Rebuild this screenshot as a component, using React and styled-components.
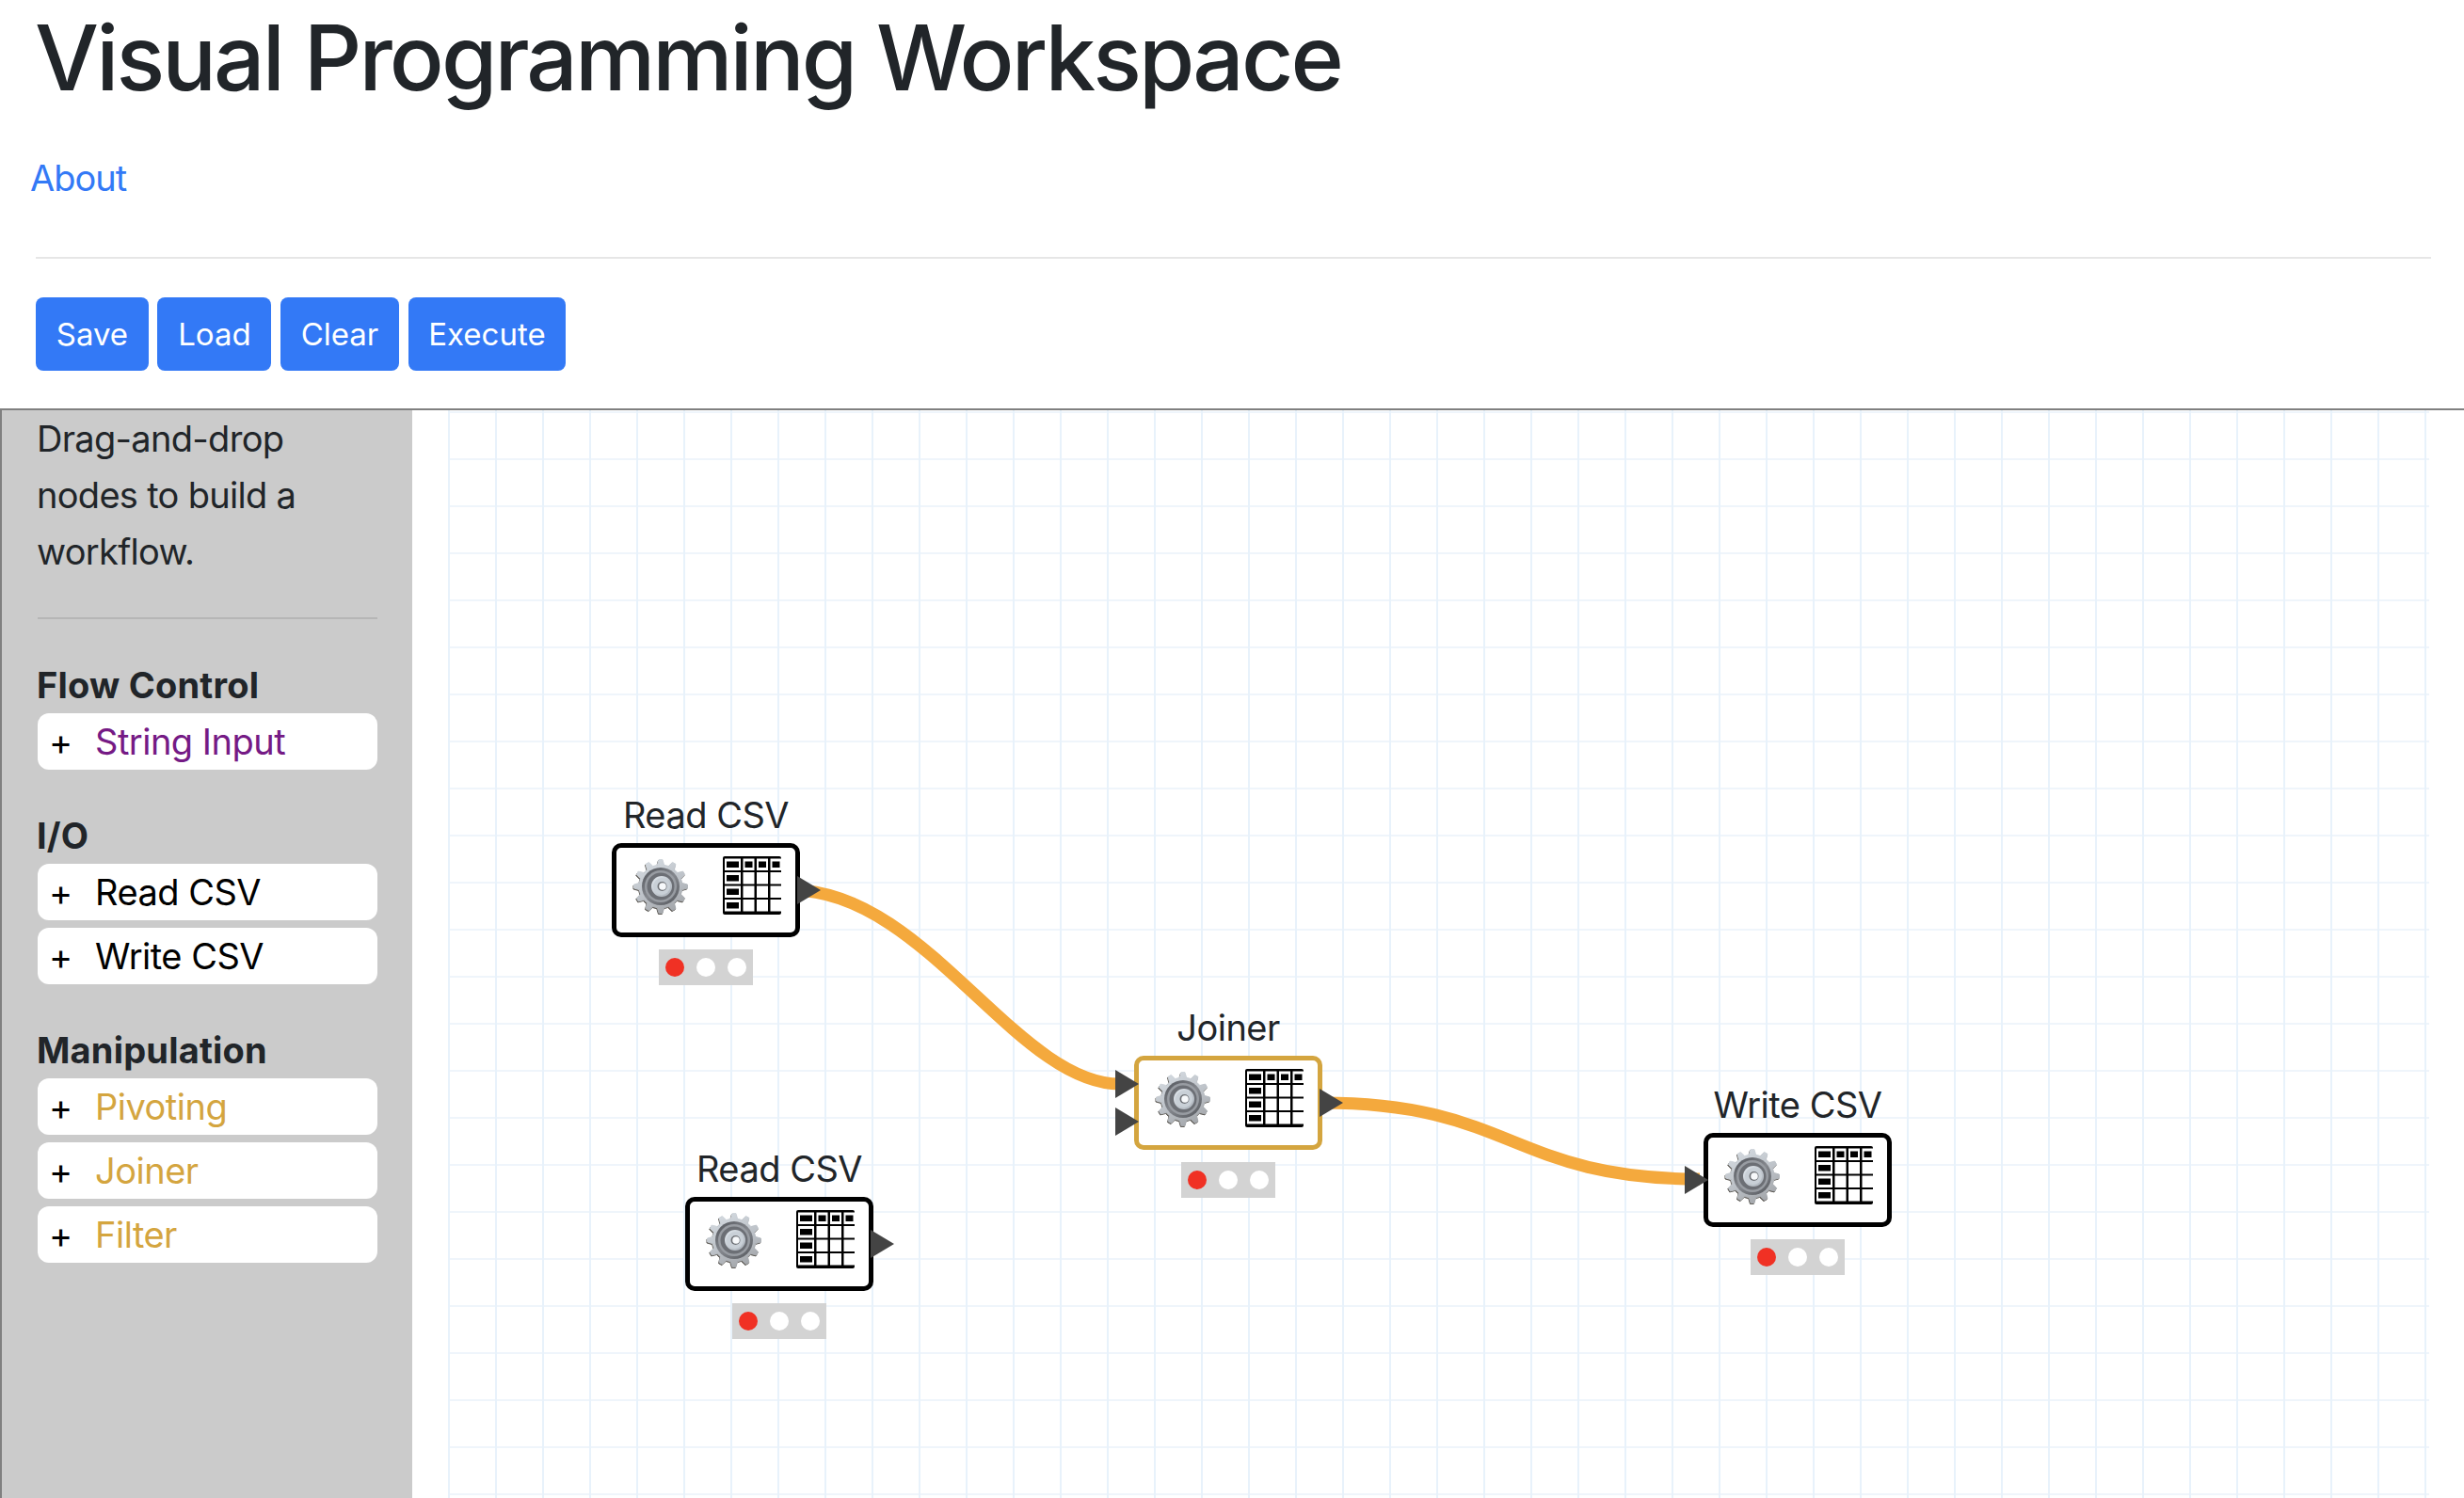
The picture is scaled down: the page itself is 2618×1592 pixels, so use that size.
import React from 'react'
import styled, { createGlobalStyle } from 'styled-components'

const GlobalStyle = createGlobalStyle`
  html, body {
    margin: 0;
    padding: 0;
    background: #fff;
    font-family: Inter, "Noto Sans", "Liberation Sans", sans-serif;
    color: #212529;
  }
`

const palette = [
  {
    title: 'Flow Control',
    items: [{ label: 'String Input', color: '#751a85' }],
  },
  {
    title: 'I/O',
    items: [
      { label: 'Read CSV', color: '#000' },
      { label: 'Write CSV', color: '#000' },
    ],
  },
  {
    title: 'Manipulation',
    items: [
      { label: 'Pivoting', color: '#d4a53f' },
      { label: 'Joiner', color: '#d4a53f' },
      { label: 'Filter', color: '#d4a53f' },
    ],
  },
]

const nodes = [
  { id: 'read-1', title: 'Read CSV', x: 174, y: 405, inputs: [], hasOutput: true },
  { id: 'joiner', title: 'Joiner', x: 729, y: 631, inputs: [10, 50], hasOutput: true, active: true },
  { id: 'write', title: 'Write CSV', x: 1334, y: 713, inputs: [30], hasOutput: false },
  { id: 'read-2', title: 'Read CSV', x: 252, y: 781, inputs: [], hasOutput: true },
]

function gearPath(teeth, outer, inner) {
  const step = (Math.PI * 2) / teeth
  const points = []
  for (let i = 0; i < teeth; i++) {
    const a = i * step - Math.PI / 2
    const corners = [
      [inner, a - step * 0.3],
      [outer, a - step * 0.13],
      [outer, a + step * 0.13],
      [inner, a + step * 0.3],
    ]
    corners.forEach(([r, t]) => {
      points.push(`${(30 + r * Math.cos(t)).toFixed(2)} ${(30 + r * Math.sin(t)).toFixed(2)}`)
    })
  }
  return `M${points.join('L')}Z`
}

const GEAR = gearPath(12, 28.5, 23)

function GearIcon({ id }) {
  return (
    <GearSvg viewBox="0 0 60 60">
      <defs>
        <linearGradient id={`${id}-body`} x1="0.2" y1="0" x2="0.7" y2="1">
          <stop offset="0" stopColor="#d5dbe1" />
          <stop offset="0.55" stopColor="#bcc1c7" />
          <stop offset="1" stopColor="#a2a5a9" />
        </linearGradient>
        <linearGradient id={`${id}-ring`} x1="0.1" y1="0" x2="0.9" y2="1">
          <stop offset="0" stopColor="#55585e" />
          <stop offset="0.5" stopColor="#85888e" />
          <stop offset="1" stopColor="#585b60" />
        </linearGradient>
        <linearGradient id={`${id}-hub`} x1="0" y1="0" x2="1" y2="1">
          <stop offset="0" stopColor="#e3e9ef" />
          <stop offset="1" stopColor="#a9b0b8" />
        </linearGradient>
      </defs>
      <GearShadow d={GEAR} transform="translate(-0.6 1)" />
      <GearBody d={GEAR} stroke={`url(#${id}-body)`} fill={`url(#${id}-body)`} />
      <circle cx="30" cy="30" r="20" fill={`url(#${id}-ring)`} />
      <circle cx="30" cy="30" r="17" fill="#989ca2" />
      <circle cx="30" cy="30" r="14.5" fill="#6c6f75" />
      <circle cx="31" cy="30" r="11" fill={`url(#${id}-hub)`} />
      <circle cx="31" cy="30" r="9" fill="#c9d0d7" />
      <circle cx="31.5" cy="30" r="5" fill="#6e7176" />
      <circle cx="32" cy="30" r="3.8" fill="#f7f9fb" />
    </GearSvg>
  )
}

const colWidths = [17, 12, 12, 12]

function TableIcon() {
  let cx = 2
  const cols = colWidths.map((w) => {
    const col = { x: cx, w }
    cx += w + 2.5
    return col
  })
  const rows = [0, 1, 2, 3].map((r) => 2.5 + r * 14.5)

  return (
    <TableSvg viewBox="0 0 62 62">
      <rect width="62" height="62" rx="2" fill="#000" />
      {rows.map((y, r) =>
        cols.map((col, c) => (
          <g key={`${r}-${c}`}>
            <rect x={col.x} y={y} width={col.w} height="12.5" fill="#fff" />
            {(r === 0 || c === 0) && (
              <rect
                x={col.x + 2}
                y={y + 3}
                width={col.w - 4}
                height="6.5"
                fill="#000"
              />
            )}
          </g>
        )),
      )}
    </TableSvg>
  )
}

function WorkflowNode({ node }) {
  return (
    <NodeWrap $x={node.x} $y={node.y}>
      <NodeTitle>{node.title}</NodeTitle>
      <NodeBox $active={node.active}>
        <GearIcon id={node.id} />
        <TableIcon />
        {node.inputs.map((top) => (
          <InputPort key={top} $top={top} />
        ))}
        {node.hasOutput && <OutputPort />}
      </NodeBox>
      <StatusBar>
        <StatusDot $color="#f03124" />
        <StatusDot $color="#fff" />
        <StatusDot $color="#fff" />
      </StatusBar>
    </NodeWrap>
  )
}

export default function App() {
  return (
    <>
      <GlobalStyle />
      <Page>
        <Header>
          <Title>Visual Programming Workspace</Title>
          <AboutLink href="#about">About</AboutLink>
          <HeaderRule />
          <Toolbar>
            <ToolButton>Save</ToolButton>
            <ToolButton>Load</ToolButton>
            <ToolButton>Clear</ToolButton>
            <ToolButton>Execute</ToolButton>
          </Toolbar>
        </Header>
        <Main>
          <Sidebar>
            <Hint>Drag-and-drop nodes to build a workflow.</Hint>
            <SideRule />
            {palette.map((group) => (
              <Group key={group.title}>
                <GroupTitle>{group.title}</GroupTitle>
                {group.items.map((item) => (
                  <PaletteItem key={item.label}>
                    <Plus>+</Plus>
                    <ItemLabel $color={item.color}>{item.label}</ItemLabel>
                  </PaletteItem>
                ))}
              </Group>
            ))}
          </Sidebar>
          <Canvas>
            <Edges viewBox="0 0 2105 1156">
              <Edge d="M366 510 C506 510 604 716 714 716" />
              <Edge d="M929 736 C1130 736 1130 817 1330 817" />
            </Edges>
            {nodes.map((node) => (
              <WorkflowNode key={node.id} node={node} />
            ))}
          </Canvas>
        </Main>
      </Page>
    </>
  )
}

const Page = styled.div`
  display: flex;
  flex-direction: column;
  height: 100vh;
  overflow: hidden;
`

const Header = styled.header`
  flex: none;
  box-sizing: border-box;
  height: 436px;
  padding: 4px 35px 0 38px;
  border-bottom: 2px solid #808080;
`

const Title = styled.h1`
  margin: 0 0 0 -1px;
  height: 115px;
  font-size: 96px;
  line-height: 115px;
  font-weight: 500;
  letter-spacing: -2.9px;
  color: #212529;
`

const AboutLink = styled.a`
  display: block;
  margin: 40px 0 0 -6px;
  font-size: 38px;
  line-height: 60px;
  letter-spacing: -1px;
  color: #3379f6;
  text-decoration: none;
`

const HeaderRule = styled.hr`
  margin: 54px 0 0;
  border: 0;
  height: 2px;
  background: #e6e6e6;
`

const Toolbar = styled.div`
  display: flex;
  gap: 9.5px;
  margin-top: 41px;
`

const ToolButton = styled.button`
  height: 78px;
  padding: 0 21.75px;
  border: 0;
  border-radius: 8px;
  background: #3379f6;
  color: #fff;
  font-family: inherit;
  font-size: 33px;
`

const Main = styled.main`
  flex: 1;
  display: flex;
  min-height: 0;
`

const Sidebar = styled.aside`
  flex: none;
  width: 438px;
  box-sizing: border-box;
  padding: 0 37px 0 38px;
  border-left: 2px solid #808080;
  background: #cbcbcb;
`

const Hint = styled.p`
  margin: 0 0 0 -1px;
  font-size: 38px;
  line-height: 60px;
  letter-spacing: -0.7px;
  color: #212529;
`

const SideRule = styled.hr`
  margin: 40px 0 0;
  border: 0;
  height: 2px;
  background: #b6b6b6;
`

const Group = styled.section`
  margin-top: 45px;
`

const GroupTitle = styled.h5`
  margin: 0 0 5px -1px;
  font-size: 38px;
  line-height: 50px;
  font-weight: 700;
  letter-spacing: 0.2px;
  color: #212529;
`

const PaletteItem = styled.div`
  display: flex;
  align-items: center;
  height: 60px;
  margin-bottom: 8px;
  border-radius: 12px;
  background: #fff;
`

const Plus = styled.span`
  width: 61px;
  padding-left: 12px;
  box-sizing: border-box;
  font-size: 38px;
  color: #000;
`

const ItemLabel = styled.span`
  font-size: 38px;
  letter-spacing: -0.5px;
  color: ${(p) => p.$color};
`

const Canvas = styled.div`
  position: relative;
  flex: none;
  width: 2105px;
  margin-left: 38px;
  background-image:
    linear-gradient(to right, #e8f2fb 2px, transparent 2px),
    linear-gradient(to bottom, #eff5fb 2px, transparent 2px);
  background-size: 50px 50px;
  background-position: 0 1px;
`

const Edges = styled.svg`
  position: absolute;
  inset: 0;
  width: 2105px;
  height: 1156px;
`

const Edge = styled.path`
  fill: none;
  stroke: #f4a93d;
  stroke-width: 13;
`

const NodeWrap = styled.div`
  position: absolute;
  left: ${(p) => p.$x}px;
  top: ${(p) => p.$y}px;
  display: flex;
  flex-direction: column;
  align-items: center;
  width: 200px;
`

const NodeTitle = styled.div`
  height: 50px;
  margin-bottom: 5px;
  font-size: 38px;
  line-height: 50px;
  letter-spacing: -0.5px;
  white-space: nowrap;
  color: #212529;
`

const NodeBox = styled.div`
  position: relative;
  display: flex;
  align-items: flex-start;
  gap: 36px;
  box-sizing: border-box;
  width: 200px;
  height: 100px;
  padding: 9px 0 0 17px;
  border: 5px solid ${(p) => (p.$active ? '#d4a53f' : '#000')};
  border-radius: 10px;
  background: #fff;
`

const GearSvg = styled.svg`
  flex: none;
  width: 60px;
  height: 60px;
  margin-top: 2px;
`

const GearShadow = styled.path`
  fill: #5d5a55;
  stroke: #5d5a55;
  stroke-width: 1;
  stroke-linejoin: round;
`

const GearBody = styled.path`
  stroke-width: 1;
  stroke-linejoin: round;
`

const TableSvg = styled.svg`
  flex: none;
  width: 62px;
  height: 62px;
`

const InputPort = styled.div`
  position: absolute;
  left: -25px;
  top: ${(p) => p.$top}px;
  width: 25px;
  height: 30px;
  background: #444;
  clip-path: polygon(0 0, 100% 50%, 0 100%);
`

const OutputPort = styled.div`
  position: absolute;
  right: -27px;
  top: 30px;
  width: 25px;
  height: 30px;
  background: #444;
  clip-path: polygon(0 0, 100% 50%, 0 100%);
`

const StatusBar = styled.div`
  display: flex;
  align-items: center;
  gap: 13px;
  box-sizing: border-box;
  width: 100px;
  height: 38px;
  margin-top: 13px;
  padding-left: 7px;
  background: #d3d3d3;
`

const StatusDot = styled.span`
  width: 20px;
  height: 20px;
  border-radius: 50%;
  background: ${(p) => p.$color};
`
